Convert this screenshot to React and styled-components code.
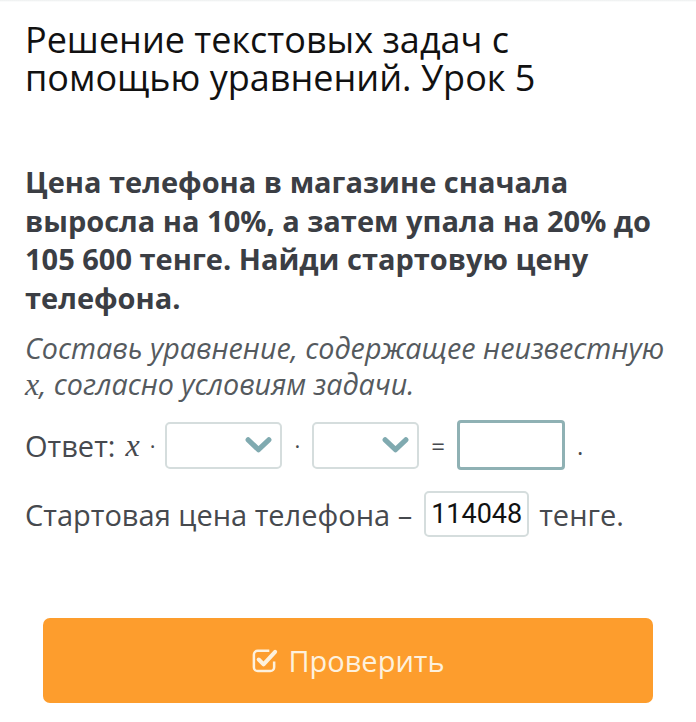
import styled, { createGlobalStyle } from "styled-components";

const Global = createGlobalStyle`
    html, body{
        margin: 0;
        padding: 0;
        background: #fff;
    }
    body{
        font-family: "Open Sans", "Liberation Sans", sans-serif;
    }
`

export default function App(){
    return(
        <Page>
            <Global/>
            <TopEdge/>
            <Title>Решение текстовых задач с<br/>помощью уравнений. Урок 5</Title>
            <Question>
                Цена телефона в магазине сначала<br/>выросла на 10%, а затем упала на 20% до<br/>105&nbsp;600 тенге. Найди стартовую цену<br/>телефона.
            </Question>
            <Hint>
                Составь уравнение, содержащее неизвестную<br/><MathX>x</MathX>, согласно условиям задачи.
            </Hint>
            <AnswerRow>
                <span>Ответ:</span>
                <MathX gap>x</MathX>
                <Dot>·</Dot>
                <Select width={117}><Chevron/></Select>
                <Dot wide>·</Dot>
                <Select width={107}><Chevron/></Select>
                <Sign>=</Sign>
                <Field width={108}/>
                <Sign>.</Sign>
            </AnswerRow>
            <AnswerRow>
                <span>Стартовая цена телефона –</span>
                <Filled>114048</Filled>
                <span>тенге.</span>
            </AnswerRow>
            <CheckButton>
                <CheckIcon/>
                <span>Проверить</span>
            </CheckButton>
        </Page>
    )
}

function Chevron(){
    return(
        <ChevronSvg viewBox="0 0 28 17">
            <polyline points="3,3 14,13.5 25,3" fill="none" stroke="#80aab0" strokeWidth="5.5" strokeLinecap="round" strokeLinejoin="round"/>
        </ChevronSvg>
    )
}

function CheckIcon(){
    return(
        <IconSvg viewBox="0 0 28 28">
            <path d="M19 4 H7 a4 4 0 0 0 -4 4 V21 a4 4 0 0 0 4 4 H20 a4 4 0 0 0 4 -4 V15" fill="none" stroke="#fdf1dd" strokeWidth="2.6"/>
            <polyline points="8,13 13,18 25,5" fill="none" stroke="#fdf1dd" strokeWidth="4.2" strokeLinecap="round" strokeLinejoin="round"/>
        </IconSvg>
    )
}

const Page = styled.div`
    width: 696px;
    min-height: 722px;
    box-sizing: border-box;
    padding: 0 25px;
    display: flex;
    flex-direction: column;
`
const TopEdge = styled.div`
    height: 2px;
    margin: 0 -25px;
    background: linear-gradient(#eceeee, #fff);
`
const Title = styled.h1`
    margin: 19px 0 0;
    font-weight: 400;
    font-size: 36px;
    line-height: 38px;
    color: #111;
    white-space: nowrap;
`
const Question = styled.p`
    margin: 66px 0 0;
    font-weight: 700;
    font-size: 29px;
    line-height: 38.5px;
    color: #3b3e44;
    white-space: nowrap;
`
const Hint = styled.p`
    margin: 13px 0 0;
    font-style: italic;
    font-size: 28.7px;
    line-height: 36px;
    color: #555a5e;
    white-space: nowrap;
`
const MathX = styled.span`
    font-family: "Liberation Serif", "DejaVu Serif", serif;
    font-style: italic;
    font-size: 32px;
    margin-left: ${p=>p.gap ? "10px" : "0"};
`
const AnswerRow = styled.div`
    display: flex;
    align-items: center;
    margin-top: 18px;
    font-size: 29px;
    color: #46494e;
    white-space: nowrap;
    & + &{
        margin-top: 21px;
    }
`
const Dot = styled.span`
    font-size: 22px;
    margin: ${p=>p.wide ? "0 12px 0 12px" : "0 10px 0 10px"};
`
const Sign = styled.span`
    font-size: 24px;
    margin: 0 12px 0 12px;
`
const Select = styled.div`
    width: ${p=>p.width}px;
    height: 47px;
    box-sizing: border-box;
    border: 2px solid #d5dddd;
    border-radius: 5px;
    display: flex;
    align-items: center;
    justify-content: flex-end;
    padding-right: 8px;
`
const ChevronSvg = styled.svg`
    width: 27px;
    height: 16px;
`
const Field = styled.div`
    width: ${p=>p.width}px;
    height: 50px;
    box-sizing: border-box;
    border: 3px solid #8fb1b4;
    border-radius: 4px;
`
const Filled = styled.div`
    height: 46px;
    box-sizing: border-box;
    margin: 0 10px 0 12px;
    padding: 0 5px;
    border: 2px solid #d5dddd;
    border-radius: 5px;
    display: flex;
    align-items: center;
    font-family: Roboto, "Liberation Sans", sans-serif;
    font-size: 27px;
    color: #111;
`
const CheckButton = styled.button`
    margin: 81px 18px 0;
    height: 85px;
    border: none;
    border-radius: 7px;
    background: #fd9d2d;
    color: #fdf1dd;
    font-family: "Open Sans", "Liberation Sans", sans-serif;
    font-size: 29px;
    display: flex;
    align-items: center;
    justify-content: center;
    gap: 10px;
`
const IconSvg = styled.svg`
    width: 27px;
    height: 27px;
`
